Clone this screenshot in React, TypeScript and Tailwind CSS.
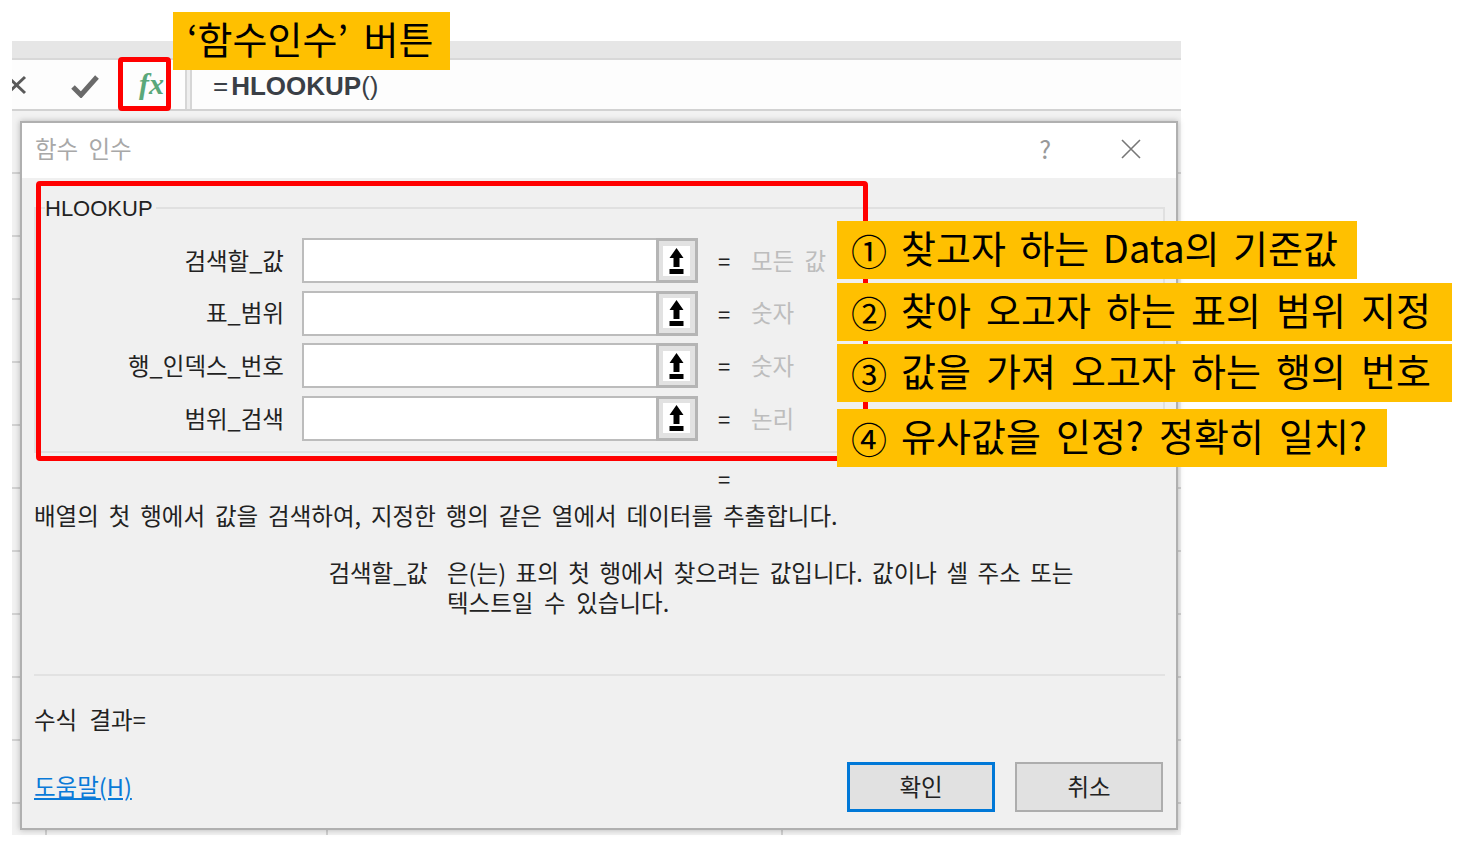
const KR = "font-['Noto_Sans_CJK_KR','Liberation_Sans',sans-serif]";

function RefBtn() {
  return (
    <div className="w-[42px] h-full shrink-0 border-[3px] border-[#b5b5b5] bg-[#e2e2e2] flex items-center justify-center pr-[2px]">
      <div className="w-[27px] h-[30px] bg-white flex items-center justify-center">
        <svg width="15" height="26" viewBox="0 0 15 26">
          <path d="M7.5 0 L14.5 10 H10.5 V19 H4.5 V10 H0.5 Z M0.5 21 H14.5 V26 H0.5 Z" fill="#000" />
        </svg>
      </div>
    </div>
  );
}

function Row({ label, hint }: { label: string; hint: string }) {
  return (
    <div className="flex items-center h-[45px] shrink-0">
      <div className="w-[248px] text-right text-[23.5px] text-[#222] [word-spacing:5px]">{label}</div>
      <div className="ml-[18px] w-[396px] h-full flex">
        <div className="flex-1 border-2 border-r-0 border-[#bcbcbc] bg-white" />
        <RefBtn />
      </div>
      <div className="ml-[20px] w-[33px] text-[22px] text-[#222]">=</div>
      <div className="text-[23.5px] text-[#bdbdbd] whitespace-nowrap [word-spacing:5px]">{hint}</div>
    </div>
  );
}

function Note({ n, text, w, cls, ws }: { n: string; text: string; w: string; cls: string; ws: string }) {
  return (
    <div className={`absolute left-[837px] h-[58px] ${w} ${cls} bg-[#ffc000] flex items-center pl-[14px] text-[38px] text-black whitespace-nowrap`}>
      <span className="w-[50px] text-[36px]">{n}</span>
      <span className={`mt-[-7px] ${ws}`}>{text}</span>
    </div>
  );
}

export default function App() {
  return (
    <div className={`relative w-[1460px] h-[844px] bg-white overflow-hidden ${KR}`}>
      <div className="ml-[12px] w-[1169px] h-[835px] pt-[41px]">
        <div className="h-[794px] flex flex-col">
          <div className="h-[19px] bg-[#e6e6e6] border-b-2 border-[#d8d8d8] shrink-0" />
          <div className="h-[51px] bg-[#fdfdfd] border-b-[2px] border-[#d2d2d2] shrink-0 flex overflow-hidden">
            <div className="w-[175px] shrink-0 border-r-[2px] border-[#d6d6d6] flex items-center">
              <svg className="ml-[-6px] shrink-0" width="22" height="20" viewBox="0 0 22 20">
                <path d="M3 3 L19 18 M19 2 L3 17" stroke="#5a5a5a" strokeWidth="3" />
              </svg>
              <svg className="ml-[43px] mt-[2px] shrink-0" width="28" height="24" viewBox="0 0 28 24">
                <path d="M2 13 L10 21 L26 3" stroke="#6a6a6a" strokeWidth="5" fill="none" />
              </svg>
            </div>
            <div className="w-[5px] bg-[#eeeeee] border-r-2 border-[#d6d6d6]" />
            <div className="flex-1 pl-[21px] pt-[3px] flex items-center text-[26px] text-[#3a3f46] font-['Liberation_Sans',sans-serif]">
              <span className="font-normal mr-[3px]">=</span>
              <span className="font-bold">HLOOKUP</span>
              <span className="font-normal">()</span>
            </div>
          </div>

          <div className="relative flex-1 pt-[10px] pl-[8px] bg-[repeating-linear-gradient(to_bottom,#f2f2f2_0px,#f2f2f2_61px,#d2d2d2_61px,#d2d2d2_63px)]">
            <div className="absolute left-[33px] bottom-0 w-[2px] h-[6px] bg-[#cfcfcf]" />
            <div className="absolute left-[314px] bottom-0 w-[2px] h-[6px] bg-[#cfcfcf]" />
            <div className="absolute left-[769px] bottom-0 w-[2px] h-[6px] bg-[#cfcfcf]" />
            <div className="relative w-[1158px] h-[709px] border-2 border-[#b0b0b0] bg-[#f0f0f0] shadow-[0_0_6px_rgba(0,0,0,0.25)] flex flex-col">
              <div className="h-[55px] bg-white shrink-0 flex items-center pl-[13px] pb-[3px]">
                <span className="text-[23.5px] text-[#a8a8a8] flex-1 [word-spacing:5px]">함수 인수</span>
                <span className="text-[25px] text-[#999] mr-[70px]">?</span>
                <svg className="mr-[35px]" width="20" height="20" viewBox="0 0 20 20">
                  <path d="M1 1 L19 19 M19 1 L1 19" stroke="#777" strokeWidth="1.6" />
                </svg>
              </div>
              <div className="flex-1 flex flex-col pl-[12px] pr-[11px]">
                <div className="mt-[29px] h-[246px] border-2 border-[#e0e0e0] relative pt-[29px] flex flex-col gap-[7.6px]">
                  <div className="absolute left-[9px] top-[-15px] bg-[#f0f0f0] text-[22px] leading-[30px] text-[#222] font-['Liberation_Sans',sans-serif] pr-[3px]">HLOOKUP</div>
                  <Row label="검색할_값" hint="모든 값" />
                  <Row label="표_범위" hint="숫자" />
                  <Row label="행_인덱스_번호" hint="숫자" />
                  <Row label="범위_검색" hint="논리" />
                </div>
                <div className="pl-[684px] text-[22px] leading-[24px] mt-[13px] text-[#222]">=</div>
                <div className="mt-[10px] text-[23.5px] leading-[30px] text-[#222] whitespace-nowrap [word-spacing:4.6px]">배열의 첫 행에서 값을 검색하여, 지정한 행의 같은 열에서 데이터를 추출합니다.</div>
                <div className="mt-[27px] flex text-[23.5px] leading-[30px] text-[#222] whitespace-nowrap [word-spacing:4.2px]">
                  <div className="w-[394px] text-right shrink-0">검색할_값</div>
                  <div className="ml-[19px]">
                    <div>은(는) 표의 첫 행에서 찾으려는 값입니다. 값이나 셀 주소 또는</div>
                    <div className="[word-spacing:5.3px]">텍스트일 수 있습니다.</div>
                  </div>
                </div>
                <div className="mt-[57px] h-[2px] bg-[#e2e2e2]" />
                <div className="mt-[28px] text-[23.5px] leading-[30px] text-[#222] [word-spacing:7px]">수식 결과=</div>
                <div className="mt-[28px] flex items-center pr-[2px]">
                  <a className="text-[23.5px] text-[#0a7ad8] underline flex-1">도움말(H)</a>
                  <button className="w-[148px] h-[50px] border-[3px] border-[#0078d7] bg-[#e1e1e1] text-[23.5px] text-[#222]">확인</button>
                  <button className="ml-[20px] w-[148px] h-[50px] border-2 border-[#adadad] bg-[#e1e1e1] text-[23.5px] text-[#222]">취소</button>
                </div>
              </div>
            </div>
          </div>
        </div>
      </div>

      {/* annotation overlays */}
      <div className="absolute left-[173px] top-[12px] w-[277px] h-[58px] bg-[#ffc000] pl-[14px] pt-[1px] text-[38px] leading-[50px] text-black whitespace-nowrap [word-spacing:7px]">‘함수인수’ 버튼</div>
      <div className="absolute left-[118px] top-[57px] w-[53px] h-[54px] border-[5px] border-[#ff0000] rounded-[4px] flex items-center justify-end pr-[2px]">
        <span className="font-['Liberation_Serif',serif] italic font-bold text-[30px] text-[#5aa87a] leading-none">fx</span>
      </div>
      <div className="absolute left-[36px] top-[181px] w-[832px] h-[280px] border-[5px] border-[#ff0000] rounded-[4px]" />
      <Note n="①" text="찾고자 하는 Data의 기준값" w="w-[520px]" cls="top-[221px]" ws="[word-spacing:5px]" />
      <Note n="②" text="찾아 오고자 하는 표의 범위 지정" w="w-[615px]" cls="top-[283px]" ws="[word-spacing:6.6px]" />
      <Note n="③" text="값을 가져 오고자 하는 행의 번호" w="w-[615px]" cls="top-[344px]" ws="[word-spacing:6.6px]" />
      <Note n="④" text="유사값을 인정? 정확히 일치?" w="w-[550px]" cls="top-[409px]" ws="[word-spacing:6.6px]" />
    </div>
  );
}
